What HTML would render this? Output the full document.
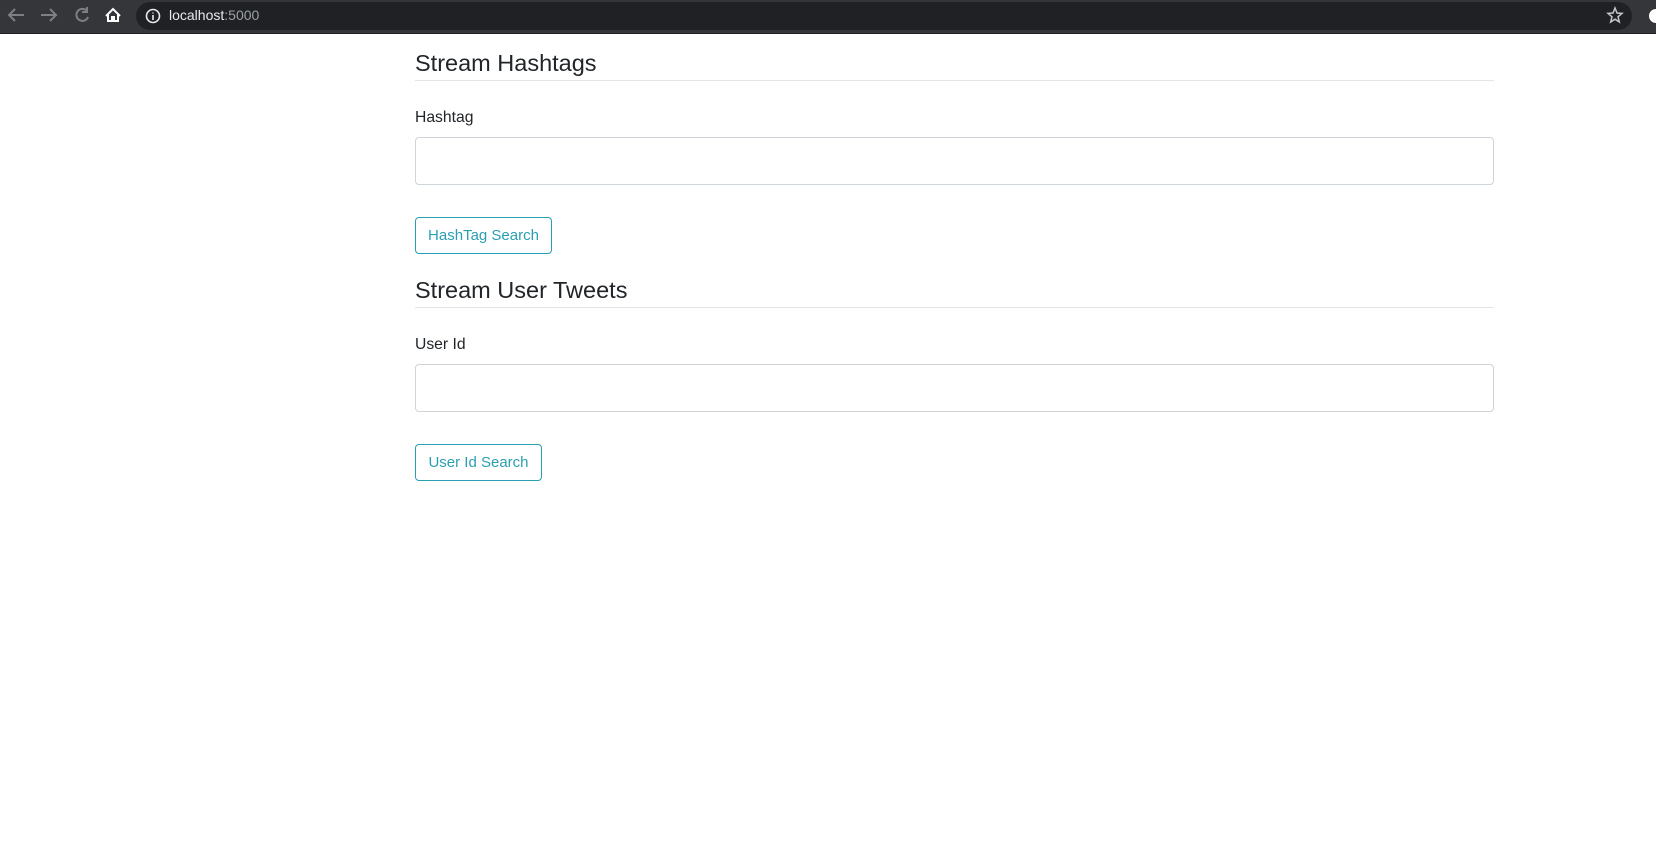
<!DOCTYPE html>
<html><head><meta charset="utf-8"><style>
body{margin:0;width:1656px;height:862px;background:#fff;font-family:"Liberation Sans",sans-serif;overflow:hidden;position:relative}
.bar{position:absolute;left:0;top:0;width:1656px;height:33px;background:#35363a;border-bottom:1px solid #202124}
.pill{position:absolute;left:136px;top:2px;width:1496px;height:28px;border-radius:14px;background:#202124}
.url{position:absolute;left:169px;top:7px;font-size:14px;color:#e8eaed}
.url span{color:#9aa0a6}
.h{position:absolute;left:415px;font-size:23.5px;color:#212529}
.hr{position:absolute;left:415px;width:1079px;height:1px;background:#e5e5e5}
.lbl{position:absolute;left:415px;font-size:15.7px;color:#212529}
.in{position:absolute;left:415px;width:1077px;height:46px;border:1px solid #ced4da;border-radius:4px}
.btn{position:absolute;left:415px;height:37px;border:1px solid #2a9fb3;border-radius:4px;color:#2a9fb3;font-size:15px;line-height:35px;text-align:center;box-sizing:border-box}
</style></head><body>
<div class="bar">
<svg width="130" height="33" style="position:absolute;left:0;top:0" fill="none" stroke-width="2">
<path d="M24 15H9M15 9l-6 6 6 6" stroke="#7d7f82"/>
<path d="M41 15h15M50 9l6 6-6 6" stroke="#7d7f82"/>
<path d="M87 11a6 6 0 1 0 1 6M87 7v5h-5" stroke="#7d7f82"/>
<path d="M106 16l7-7 7 7M108 14v7h4v-4h2v4h4v-7" stroke="#fff"/>
</svg>
<div class="pill"></div>
<svg width="18" height="18" style="position:absolute;left:144px;top:7px"><circle cx="9" cy="9" r="6.5" stroke="#e8eaed" stroke-width="1.6" fill="none"/><path d="M9 8v5M9 5.5v1" stroke="#e8eaed" stroke-width="1.6"/></svg>
<div class="url">localhost<span>:5000</span></div>
<svg width="18" height="18" style="position:absolute;left:1606px;top:6px"><path d="M9 2l2 5 5 .4-4 3.4 1.3 5.2L9 13.2 4.7 16 6 10.8 2 7.4 7 7z" stroke="#c4c6c9" stroke-width="1.5" fill="none"/></svg>
<div style="position:absolute;left:1649px;top:9px;width:14px;height:14px;border-radius:7px;background:#fff"></div>
</div>
<div class="h" style="top:50px">Stream Hashtags</div>
<div class="hr" style="top:80px"></div>
<div class="lbl" style="top:109px">Hashtag</div>
<div class="in" style="top:137px"></div>
<div class="btn" style="top:217px;width:137px">HashTag Search</div>
<div class="h" style="top:277px">Stream User Tweets</div>
<div class="hr" style="top:307px"></div>
<div class="lbl" style="top:336px">User Id</div>
<div class="in" style="top:364px"></div>
<div class="btn" style="top:444px;width:127px">User Id Search</div>
</body></html>
